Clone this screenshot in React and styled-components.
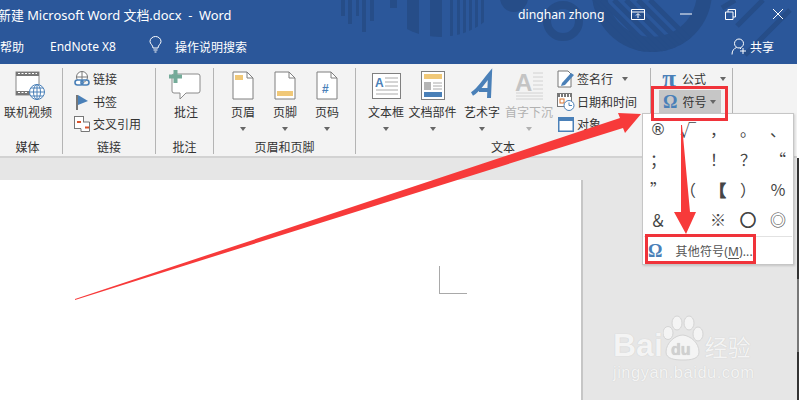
import React from "react";
import styled, { createGlobalStyle } from "styled-components";

const cjk = `"Noto Sans", "Noto Sans CJK SC", sans-serif`;
const blue = "#2b579a";
const accent = "#4a80b8";

const Global = createGlobalStyle`
  html, body { margin: 0; padding: 0; background: #fff; }
  body { width: 799px; height: 400px; overflow: hidden; font-family: ${cjk}; }
`;

const Screen = styled.div`
  position: relative;
  width: 799px;
  height: 400px;
  overflow: hidden;
`;
const Window = styled.div`
  width: 797px;
`;
const TitleBar = styled.header`
  position: relative;
  height: 64px;
  background: ${blue};
  color: #fff;
  overflow: hidden;
`;
const Pattern = styled.svg`
  position: absolute;
  inset: 0;
`;
const TitleRow = styled.div`
  position: relative;
  display: flex;
  align-items: center;
  height: 28px;
`;
const DocTitle = styled.div`
  flex: none;
  width: 520px;
  margin-left: -2px;
  font-size: 12.9px;
  white-space: pre;
`;
const UserName = styled.div`
  flex: none;
  width: 112px;
  font-size: 12.2px;
`;
const WinButton = styled.div`
  flex: none;
  display: flex;
  justify-content: center;
  width: ${(p) => p.$w}px;
  margin-left: ${(p) => p.$ml || 0}px;
`;
const TabRow = styled.div`
  position: relative;
  display: flex;
  align-items: center;
  height: 36px;
  box-sizing: border-box;
  padding-top: 1px;
  font-size: 12px;
`;
const Tab = styled.div`
  width: ${(p) => p.$w}px;
  white-space: nowrap;
`;
const ShareLabel = styled.div`
  margin-left: 3px;
  font-size: 12px;
`;

const Ribbon = styled.section`
  display: flex;
  height: 94px;
  box-sizing: border-box;
  background: #f3f3f3;
  border-bottom: 2px solid #d2d2d2;
  color: #333;
  font-size: 12px;
`;
const Group = styled.div`
  display: flex;
  flex-direction: column;
  width: ${(p) => p.$w}px;
  height: 86px;
  margin-top: 4px;
  box-sizing: border-box;
  border-right: 1px solid #b4b4b4;
`;
const GroupBody = styled.div`
  flex: none;
  display: flex;
  height: 71px;
  padding-left: ${(p) => p.$pad || 0}px;
`;
const GroupLabel = styled.div`
  height: 15px;
  padding-right: ${(p) => p.$shift || 0}px;
  line-height: 18px;
  text-align: center;
  white-space: nowrap;
`;
const Large = styled.div`
  display: flex;
  flex-direction: column;
  align-items: center;
  width: ${(p) => p.$w}px;
  color: ${(p) => (p.$off ? "#b1b1b1" : "inherit")};
  white-space: nowrap;
`;
const LargeIcon = styled.div`
  display: flex;
  align-items: center;
  justify-content: center;
  height: 35px;
  margin-bottom: 1px;
`;
const LargeText = styled.div`
  height: 18px;
  line-height: 18px;
`;
const Caret = styled.i`
  display: block;
  width: 0;
  height: 0;
  margin: ${(p) => p.$m || "5px auto 0"};
  border-left: 3.5px solid transparent;
  border-right: 3.5px solid transparent;
  border-top: 4px solid ${(p) => (p.$off ? "#b1b1b1" : "#666")};
`;
const SmallStack = styled.div`
  display: flex;
  flex-direction: column;
  margin-left: ${(p) => p.$ml || 0}px;
`;
const SmallRow = styled.div`
  display: flex;
  align-items: center;
  gap: ${(p) => p.$gap || 3}px;
  height: 22.5px;
  white-space: nowrap;
`;
const SmallIcon = styled.span`
  display: flex;
  justify-content: center;
  width: ${(p) => p.$w || 16}px;
`;

const Body = styled.main`
  display: flex;
  height: 242px;
`;
const DocArea = styled.div`
  width: 797px;
  box-sizing: border-box;
  padding-top: 22px;
  background: #e6e6e6;
`;
const Page = styled.div`
  display: flex;
  justify-content: flex-end;
  width: 583px;
  height: 220px;
  box-sizing: border-box;
  padding: 86px 114px 0 0;
  background: #fff;
  border-right: 2px solid #c6c6c6;
`;
const CornerMark = styled.div`
  width: 27px;
  height: 27px;
  border-left: 1px solid #a9a9a9;
  border-bottom: 1px solid #a9a9a9;
`;
const ScrollEdge = styled.div`
  width: 2px;
  background: linear-gradient(#333 0 50%, #777 50% 80%, #333 80%);
`;

const Popup = styled.div`
  position: absolute;
  left: 642px;
  top: 113px;
  width: 152px;
  height: 152px;
  box-sizing: border-box;
  background: #fff;
  border: 1px solid #c6c6c6;
  box-shadow: 1px 1px 2px rgba(0, 0, 0, 0.15);
`;
const SymbolGrid = styled.div`
  display: grid;
  grid-template-columns: repeat(5, 30px);
  grid-auto-rows: 30px;
  height: 120px;
  margin-bottom: 2px;
  color: #444;
  font-size: 16px;
  font-family: "Noto Sans CJK SC", sans-serif;
`;
const Symbol = styled.div`
  display: flex;
  align-items: center;
  justify-content: center;
  font-family: ${(p) => (p.$latin ? `"DejaVu Sans", sans-serif` : "inherit")};
  -webkit-text-stroke: ${(p) => (p.$heavy ? "1px #444" : "0")};
`;
const MenuItem = styled.div`
  display: flex;
  align-items: center;
  gap: 13px;
  height: 27px;
  margin: 0 1px;
  padding-left: 4px;
  border-top: 1px solid #e2e2e2;
  color: #555;
  font-size: 12px;
  letter-spacing: 0.15px;
  white-space: nowrap;
  u { text-underline-offset: 2px; }
`;
const Omega = styled.span`
  color: ${accent};
  font: bold ${(p) => p.$size || 18}px / 20px "Liberation Serif", serif;
`;
const Highlight = styled.div`
  position: absolute;
  left: 659px;
  top: 90px;
  width: 62px;
  height: 23px;
  display: flex;
  align-items: center;
  gap: 5px;
  padding-left: 4px;
  box-sizing: border-box;
  background: #c6c6c6;
  color: #333;
  font-size: 12px;
`;
const RedBox = styled.div`
  position: absolute;
  left: ${(p) => p.$x}px;
  top: ${(p) => p.$y}px;
  width: ${(p) => p.$w}px;
  height: ${(p) => p.$h}px;
  box-sizing: border-box;
  border: 3px solid #f0333a;
`;
const Arrows = styled.svg`
  position: absolute;
  inset: 0;
  pointer-events: none;
`;
const Watermark = styled.div`
  position: absolute;
  left: 613px;
  top: 315px;
  width: 145px;
  color: #f4f4f4;
  text-shadow: 0 0 1px #c4c4c4;
`;
const MarkTop = styled.div`
  display: flex;
  align-items: flex-end;
  height: 47px;
  font-family: "Liberation Sans", sans-serif;
  font-size: 32px;
  font-weight: bold;
  line-height: 34px;
`;
const MarkCn = styled.span`
  margin-left: 1px;
  font-family: "Noto Sans CJK SC", sans-serif;
  font-size: 23px;
  font-weight: 400;
  line-height: 32px;
`;
const MarkSub = styled.div`
  margin-top: 1px;
  font-family: "Liberation Sans", sans-serif;
  font-size: 16.5px;
  line-height: 19px;
  letter-spacing: 0.5px;
  white-space: nowrap;
`;

const BgPattern = () => (
  <Pattern width="797" height="64" viewBox="0 0 797 64">
    <defs>
      <clipPath id="half"><circle cx="440" cy="-36" r="73" /></clipPath>
      <clipPath id="big"><circle cx="652" cy="-8" r="60" /></clipPath>
    </defs>
    <g fill="#264d88">
      <rect x="341" y="0" width="4" height="16" />
      <rect x="348" y="0" width="4" height="24" />
      <rect x="356" y="0" width="3" height="16" />
      <rect x="362" y="0" width="4" height="32" />
      <rect x="370" y="0" width="4" height="21" />
      <g clipPath="url(#half)">
        <rect x="390" y="0" width="7" height="8" />
        <rect x="407" y="0" width="12" height="40" />
        <rect x="430" y="0" width="12" height="40" />
        <rect x="450" y="0" width="3" height="40" />
        <rect x="457" y="0" width="3" height="40" />
        <rect x="463" y="0" width="3" height="40" />
        <rect x="469" y="0" width="3" height="40" />
        <rect x="475" y="0" width="3" height="40" />
        <rect x="481" y="0" width="3" height="40" />
      </g>
      <circle cx="514" cy="-2" r="14" />
      <circle cx="652" cy="-8" r="60" />
    </g>
    <circle cx="563" cy="21" r="16" fill="none" stroke="#264d88" strokeWidth="8" />
    <circle cx="652" cy="-8" r="45" fill={blue} />
    <g clipPath="url(#big)" stroke="#264d88" strokeWidth="5">
      <path d="M590 0 L650 60 M602 0 L662 60 M614 0 L674 60 M626 0 L686 60 M638 0 L698 60 M650 0 L710 60" />
    </g>
    <g stroke="#264d88" strokeWidth="5">
      <path d="M735 0 L722 8 M763 0 L737 26 M790 10 L745 55" />
    </g>
  </Pattern>
);

const Svg = ({ w, h, children }) => (
  <svg width={w} height={h} viewBox={`0 0 ${w} ${h}`} overflow="visible">{children}</svg>
);

const PageIcon = ({ children }) => (
  <Svg w={22} h={29}>
    <path d="M1 1H15L21 7V28H1Z" fill="#fff" stroke="#7f7f7f" />
    <path d="M15 1V7H21" fill="none" stroke="#7f7f7f" />
    {children}
  </Svg>
);

const FilmIcon = () => (
  <Svg w={34} h={30}>
    <g transform="translate(4 0)">
      <rect x="1" y="1" width="23" height="23" fill="#fff" stroke="#888" />
      <path d="M1 1H24V5H1ZM1 20H24V24H1Z" fill="#777" />
      <path d="M3 2.5H22M3 21.5H12" stroke="#fff" strokeDasharray="2 1.5" />
      <circle cx="22" cy="21" r="7.5" fill="#fff" stroke={accent} />
      <path d="M14.5 21H29.5M22 13.5V28.5M16 17H28M16 25H28" stroke={accent} fill="none" />
      <ellipse cx="22" cy="21" rx="3.5" ry="7.5" fill="none" stroke={accent} />
    </g>
  </Svg>
);

const LinkIcon = () => (
  <Svg w={16} h={16}>
    <circle cx="8" cy="6" r="5.5" fill="#fff" stroke="#777" />
    <path d="M2.5 6H13.5M8 .5V11.5" stroke="#777" />
    <rect x="1" y="9" width="8" height="5" rx="2.5" fill="#fff" stroke={accent} strokeWidth="1.6" />
    <rect x="7" y="9" width="8" height="5" rx="2.5" fill="none" stroke={accent} strokeWidth="1.6" />
  </Svg>
);
const FlagIcon = () => (
  <Svg w={16} h={16}>
    <path d="M3 1V16" stroke="#777" strokeWidth="2" />
    <path d="M4 1L14 7L4 11Z" fill={accent} />
  </Svg>
);
const CrossRefIcon = () => (
  <Svg w={16} h={16}>
    <rect x="0.5" y="0.5" width="9" height="12" fill="#fff" stroke="#777" />
    <path d="M9 6H15.5V15.5H7V13" fill="#fff" stroke="#777" />
    <path d="M3 6H7" stroke="#d9532c" strokeWidth="2" />
    <path d="M11 11.5H15" stroke="#d9532c" strokeWidth="2" />
  </Svg>
);
const CommentIcon = () => (
  <Svg w={34} h={32}>
    <path d="M5 4H29Q31 4 31 6V21Q31 23 29 23H17L11 29V23H5Q3 23 3 21V6Q3 4 5 4Z" fill="#fff" stroke="#8a8a8a" />
    <path d="M4.5 0H8.5V4.5H13V8.5H8.5V13H4.5V8.5H0V4.5H4.5Z" fill="#74ab99" />
  </Svg>
);
const TextBoxIcon = () => (
  <Svg w={29} h={26}>
    <rect x="0.5" y="0.5" width="28" height="25" fill="#fff" stroke="#808080" />
    <text x="3" y="14" fontSize="12" fontWeight="bold" fill={accent} fontFamily="Liberation Sans">A</text>
    <path d="M13 5H26M13 9H26M13 13H26M4 17H26M4 21H26" stroke="#aaa" />
  </Svg>
);
const PartsIcon = () => (
  <Svg w={24} h={29}>
    <rect x="0.5" y="0.5" width="23" height="28" fill="#fff" stroke="#808080" />
    <rect x="3" y="3" width="18" height="5" fill="#f0c878" />
    <rect x="3" y="11" width="7" height="8" fill="#b5b5b5" />
    <path d="M12 12H21M12 15H21M12 18H21" stroke="#aaa" />
    <rect x="3" y="21" width="18" height="5" fill={accent} />
  </Svg>
);
const WordArtIcon = () => (
  <Svg w={24} h={28}>
    <path d="M2 22C9 18 14 9 20 2L19 26M9 18H19" fill="none" stroke={accent} strokeWidth="4" />
  </Svg>
);
const DropCapIcon = () => (
  <Svg w={28} h={29}>
    <text x="0" y="20" fontSize="24" fontWeight="bold" fill="#c4c4c4" fontFamily="Liberation Sans">A</text>
    <path d="M18 2H28M18 6H28M18 10H28M18 14H28M18 18H28M1 22H28M1 25H28M1 28H28" stroke="#d2d2d2" />
  </Svg>
);
const SignIcon = () => (
  <Svg w={18} h={18}>
    <path d="M1 1H11L14 4V17H1Z" fill="#fff" stroke="#777" />
    <path d="M5 13L14 3L17 5L8 15L4 16Z" fill={accent} />
  </Svg>
);
const DateIcon = () => (
  <Svg w={18} h={18}>
    <rect x="0.5" y="0.5" width="14" height="13" fill="#fff" stroke="#777" />
    <path d="M1 2.5H14" stroke="#777" strokeWidth="3" strokeDasharray="2 1" />
    <rect x="3" y="6" width="4" height="4" fill="none" stroke="#d9722c" />
    <circle cx="12" cy="12.5" r="5" fill="#fff" stroke={accent} />
    <path d="M12 9.5V12.5H15" fill="none" stroke={accent} />
  </Svg>
);
const ObjectIcon = () => (
  <Svg w={16} h={15}>
    <rect x="0.75" y="0.75" width="14.5" height="13.5" fill="#fff" stroke={accent} strokeWidth="1.5" />
    <rect x="1" y="1" width="14" height="3" fill={accent} />
  </Svg>
);
const BulbIcon = () => (
  <Svg w={13} h={17}>
    <path d="M4 12C4 9 1 8 1 5.5A5.5 5 0 0 1 12 5.5C12 8 9 9 9 12Z" fill="none" stroke="#fff" />
    <path d="M4.5 14H8.5M5.5 16H7.5" stroke="#fff" />
  </Svg>
);
const UserIcon = () => (
  <Svg w={16} h={17}>
    <circle cx="8" cy="5.5" r="4.5" fill="none" stroke="#fff" />
    <path d="M1 16.5C1 12.5 3 10.5 5.5 9.5M10 10.5H9" fill="none" stroke="#fff" />
    <path d="M12 10V16M9 13H15" stroke="#fff" />
  </Svg>
);

// the blanks are the two cells hidden behind the red arrow
const symbols = ["®", "√", "，", "。", "、", "；", "", "！", "？", "“", "”", "（", "【", "）", "％", "＆", "", "※", "○", "◎"];

const App = () => (
  <Screen>
    <Global />
    <Window>
      <TitleBar>
        <BgPattern />
        <TitleRow>
          <DocTitle>新建 Microsoft Word 文档.docx  -  Word</DocTitle>
          <UserName>dinghan zhong</UserName>
          <WinButton $w={15}>
            <Svg w={14} h={11}>
              <path d="M.5.5H13.5V10.5H.5ZM1 3H13M7 9V5M5 6.5L7 4.5L9 6.5" fill="none" stroke="#fff" />
            </Svg>
          </WinButton>
          <WinButton $w={48} $ml={17}>
            <Svg w={12} h={2}><path d="M0 1H12" stroke="#fff" /></Svg>
          </WinButton>
          <WinButton $w={40}>
            <Svg w={11} h={11}>
              <path d="M.5 3H8V10.5H.5ZM3 3V.5H10.5V8H8" fill="none" stroke="#fff" />
            </Svg>
          </WinButton>
          <WinButton $w={56}>
            <Svg w={12} h={12}><path d="M1 1L11 11M11 1L1 11" stroke="#fff" /></Svg>
          </WinButton>
        </TitleRow>
        <TabRow>
          <Tab $w={50}>帮助</Tab>
          <Tab $w={99}>EndNote X8</Tab>
          <Tab $w={26}><BulbIcon /></Tab>
          <Tab $w={556}>操作说明搜索</Tab>
          <UserIcon />
          <ShareLabel>共享</ShareLabel>
        </TabRow>
      </TitleBar>

      <Ribbon>
        <Group $w={63}>
          <GroupBody $pad={3}>
            <Large $w={50}>
              <LargeIcon><FilmIcon /></LargeIcon>
              <LargeText>联机视频</LargeText>
            </Large>
          </GroupBody>
          <GroupLabel $shift={7}>媒体</GroupLabel>
        </Group>
        <Group $w={93}>
          <GroupBody $pad={11}>
            <SmallStack>
              <SmallRow><SmallIcon><LinkIcon /></SmallIcon>链接</SmallRow>
              <SmallRow><SmallIcon><FlagIcon /></SmallIcon>书签</SmallRow>
              <SmallRow><SmallIcon><CrossRefIcon /></SmallIcon>交叉引用</SmallRow>
            </SmallStack>
          </GroupBody>
          <GroupLabel>链接</GroupLabel>
        </Group>
        <Group $w={58}>
          <GroupBody $pad={5}>
            <Large $w={50}>
              <LargeIcon><CommentIcon /></LargeIcon>
              <LargeText>批注</LargeText>
            </Large>
          </GroupBody>
          <GroupLabel>批注</GroupLabel>
        </Group>
        <Group $w={142}>
          <GroupBody $pad={8}>
            <Large $w={42}>
              <LargeIcon>
                <PageIcon><rect x="3" y="4" width="8" height="5" fill="#f0c878" /></PageIcon>
              </LargeIcon>
              <LargeText>页眉</LargeText>
              <Caret />
            </Large>
            <Large $w={42}>
              <LargeIcon>
                <PageIcon><rect x="3" y="20" width="16" height="5" fill="#f0c878" /></PageIcon>
              </LargeIcon>
              <LargeText>页脚</LargeText>
              <Caret />
            </Large>
            <Large $w={42}>
              <LargeIcon>
                <PageIcon>
                  <text x="6" y="22" fontSize="12" fontWeight="bold" fill={accent} fontFamily="Liberation Sans">#</text>
                </PageIcon>
              </LargeIcon>
              <LargeText>页码</LargeText>
              <Caret />
            </Large>
          </GroupBody>
          <GroupLabel>页眉和页脚</GroupLabel>
        </Group>
        <Group $w={295}>
          <GroupBody $pad={7}>
            <Large $w={46}>
              <LargeIcon><TextBoxIcon /></LargeIcon>
              <LargeText>文本框</LargeText>
              <Caret />
            </Large>
            <Large $w={47}>
              <LargeIcon><PartsIcon /></LargeIcon>
              <LargeText>文档部件</LargeText>
              <Caret />
            </Large>
            <Large $w={52}>
              <LargeIcon><WordArtIcon /></LargeIcon>
              <LargeText>艺术字</LargeText>
              <Caret />
            </Large>
            <Large $w={42} $off>
              <LargeIcon><DropCapIcon /></LargeIcon>
              <LargeText>首字下沉</LargeText>
              <Caret $off />
            </Large>
            <SmallStack $ml={7}>
              <SmallRow $gap={2}><SmallIcon $w={18}><SignIcon /></SmallIcon>签名行<Caret $m="0 0 0 7px" /></SmallRow>
              <SmallRow $gap={2}><SmallIcon $w={18}><DateIcon /></SmallIcon>日期和时间</SmallRow>
              <SmallRow $gap={2}><SmallIcon $w={18}><ObjectIcon /></SmallIcon>对象</SmallRow>
            </SmallStack>
          </GroupBody>
          <GroupLabel>文本</GroupLabel>
        </Group>
        <Group $w={82}>
          <GroupBody $pad={9}>
            <SmallStack>
              <SmallRow $gap={4}>
                <SmallIcon $w={18}><Omega $size={25}>π</Omega></SmallIcon>公式<Caret $m="0 0 0 10px" />
              </SmallRow>
            </SmallStack>
          </GroupBody>
        </Group>
      </Ribbon>
    </Window>

    <Body>
      <DocArea>
        <Page><CornerMark /></Page>
      </DocArea>
      <ScrollEdge />
    </Body>

    <Highlight>
      <Omega>Ω</Omega>符号<Caret $m="0 0 0 -1px" />
    </Highlight>

    <Popup>
      <SymbolGrid>
        {symbols.map((s, i) => (
          <Symbol key={i} $latin={s === "®"} $heavy={s === "○" || s === "【"}>{s}</Symbol>
        ))}
      </SymbolGrid>
      <MenuItem>
        <Omega>Ω</Omega>
        <span>其他符号(<u>M</u>)...</span>
      </MenuItem>
    </Popup>

    <Watermark>
      <MarkTop>
        Bai
        <svg width="41" height="47" viewBox="0 0 41 47">
          <ellipse cx="5" cy="18" rx="5" ry="6.5" fill="#f4f4f4" stroke="#d4d4d4" />
          <ellipse cx="14" cy="8" rx="5" ry="7" fill="#f4f4f4" stroke="#d4d4d4" />
          <ellipse cx="26" cy="8" rx="5" ry="7" fill="#f4f4f4" stroke="#d4d4d4" />
          <ellipse cx="35" cy="19" rx="5" ry="7" fill="#f4f4f4" stroke="#d4d4d4" />
          <path d="M20 20C28 21 36 28 36 37C36 44 28 45 20 45C12 45 3 44 3 37C3 28 12 20 20 20Z" fill="#f4f4f4" stroke="#d4d4d4" />
          <text x="8" y="40" fontSize="16" fontWeight="bold" fill="#d0d0d0" fontFamily="Liberation Sans">du</text>
        </svg>
        <MarkCn>经验</MarkCn>
      </MarkTop>
      <MarkSub>jingyan.baidu.com</MarkSub>
    </Watermark>

    <Arrows width="799" height="400" viewBox="0 0 799 400">
      <path d="M75 299L620 118L618 113L641 114L625 133L623 128L75 300Z" fill="#f73a3a" />
      <path d="M681 125L682 125L690 212L696 212L686 234L674 212L681 212Z" fill="#f73a3a" />
    </Arrows>
    <RedBox $x={651} $y={86} $w={77} $h={35} />
    <RedBox $x={645} $y={234} $w={111} $h={30} />
  </Screen>
);

export default App;
